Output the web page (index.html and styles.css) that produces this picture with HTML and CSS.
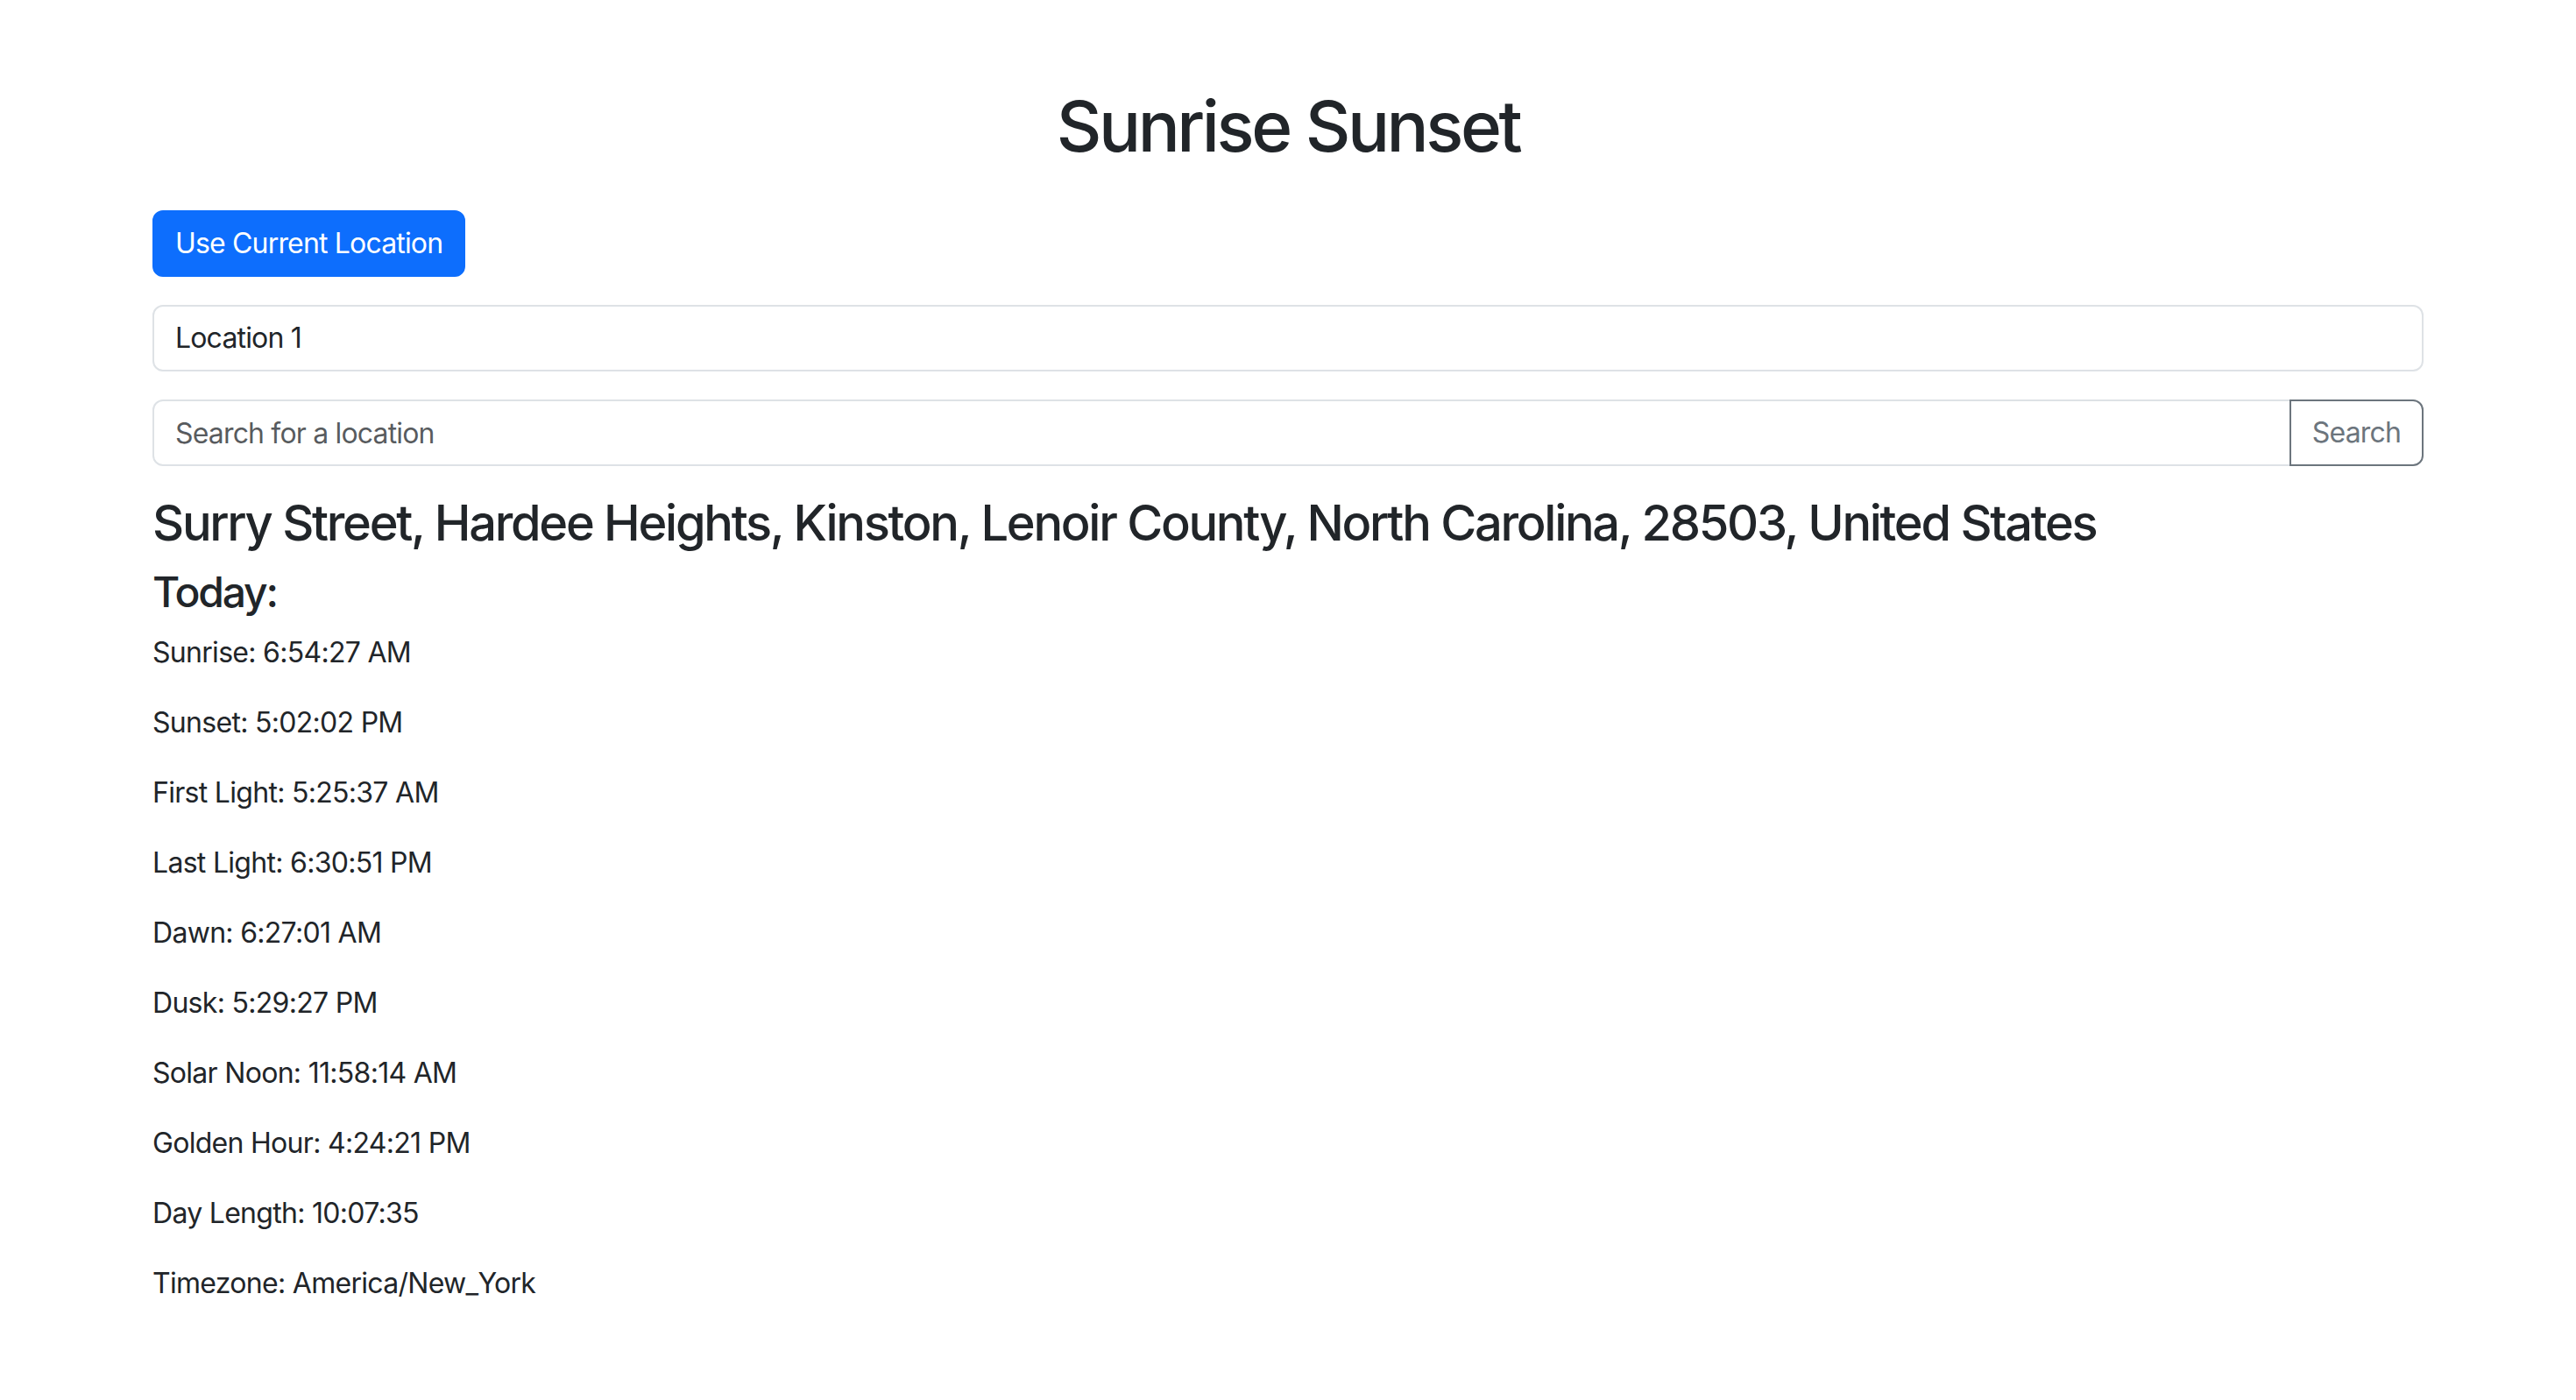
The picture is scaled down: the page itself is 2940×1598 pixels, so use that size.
FILE: index.html
```html
<!DOCTYPE html>
<html lang="en">
<head>
<meta charset="utf-8">
<title>Sunrise Sunset</title>
<link rel="stylesheet" href="styles.css">
</head>
<body>
<div class="container">
  <h1 class="title">Sunrise Sunset</h1>
  <button class="btn btn-primary">Use Current Location</button>
  <select class="form-select">
    <option>Location 1</option>
  </select>
  <div class="input-group">
    <input class="form-control" type="text" placeholder="Search for a location">
    <button class="btn btn-outline-secondary">Search</button>
  </div>
  <h3 class="address">Surry Street, Hardee Heights, Kinston, Lenoir County, North Carolina, 28503, United States</h3>
  <h4 class="today">Today:</h4>
  <p class="item">Sunrise: 6:54:27 AM</p>
  <p class="item">Sunset: 5:02:02 PM</p>
  <p class="item">First Light: 5:25:37 AM</p>
  <p class="item">Last Light: 6:30:51 PM</p>
  <p class="item">Dawn: 6:27:01 AM</p>
  <p class="item">Dusk: 5:29:27 PM</p>
  <p class="item">Solar Noon: 11:58:14 AM</p>
  <p class="item">Golden Hour: 4:24:21 PM</p>
  <p class="item">Day Length: 10:07:35</p>
  <p class="item">Timezone: America/New_York</p>
</div>
</body>
</html>
```
FILE: styles.css
```css
* {
  box-sizing: border-box;
}

html, body {
  margin: 0;
  padding: 0;
  background: #ffffff;
}

body {
  font-family: Inter, "Liberation Sans", Arial, sans-serif;
  font-size: 32px;
  line-height: 1.5;
  letter-spacing: -0.022em;
  color: #212529;
}

.container {
  max-width: 2640px;
  margin: 96px auto 0;
  padding: 0 24px;
}

.title {
  font-size: 80px;
  font-weight: 500;
  line-height: 1.2;
  letter-spacing: -0.043em;
  text-align: center;
  margin: 0 0 48px;
}

.btn {
  display: inline-block;
  font-family: inherit;
  font-size: 32px;
  line-height: 48px;
  letter-spacing: -0.026em;
  padding: 12px 24px;
  border: 2px solid transparent;
  border-radius: 12px;
  cursor: pointer;
}

.btn-primary {
  background: #0d6efd;
  border-color: #0d6efd;
  color: #ffffff;
  margin-bottom: 32px;
}

.form-select,
.form-control {
  display: block;
  width: 100%;
  font-family: inherit;
  font-size: 32px;
  line-height: 48px;
  letter-spacing: -0.026em;
  height: 76px;
  padding: 12px 24px;
  color: #212529;
  background: #ffffff;
  border: 2px solid #dee2e6;
  border-radius: 12px;
  appearance: none;
  -webkit-appearance: none;
  outline: none;
}

.form-select {
  margin-bottom: 32px;
}

.form-control::placeholder {
  color: rgba(33, 37, 41, 0.75);
}

.input-group {
  display: flex;
  margin-bottom: 32px;
}

.input-group .form-control {
  flex: 1 1 auto;
  width: 1%;
  border-top-right-radius: 0;
  border-bottom-right-radius: 0;
}

.btn-outline-secondary {
  background: #ffffff;
  color: #6c757d;
  border-color: #6c757d;
  margin-left: -2px;
  border-top-left-radius: 0;
  border-bottom-left-radius: 0;
  position: relative;
}

.address {
  font-size: 56px;
  font-weight: 500;
  line-height: 1.2;
  letter-spacing: -0.041em;
  margin: 0 0 16px;
}

.today {
  font-size: 48px;
  font-weight: 500;
  line-height: 1.2;
  letter-spacing: -0.045em;
  margin: 0 0 16px;
}

.item {
  margin: 0 0 32px;
}
```
